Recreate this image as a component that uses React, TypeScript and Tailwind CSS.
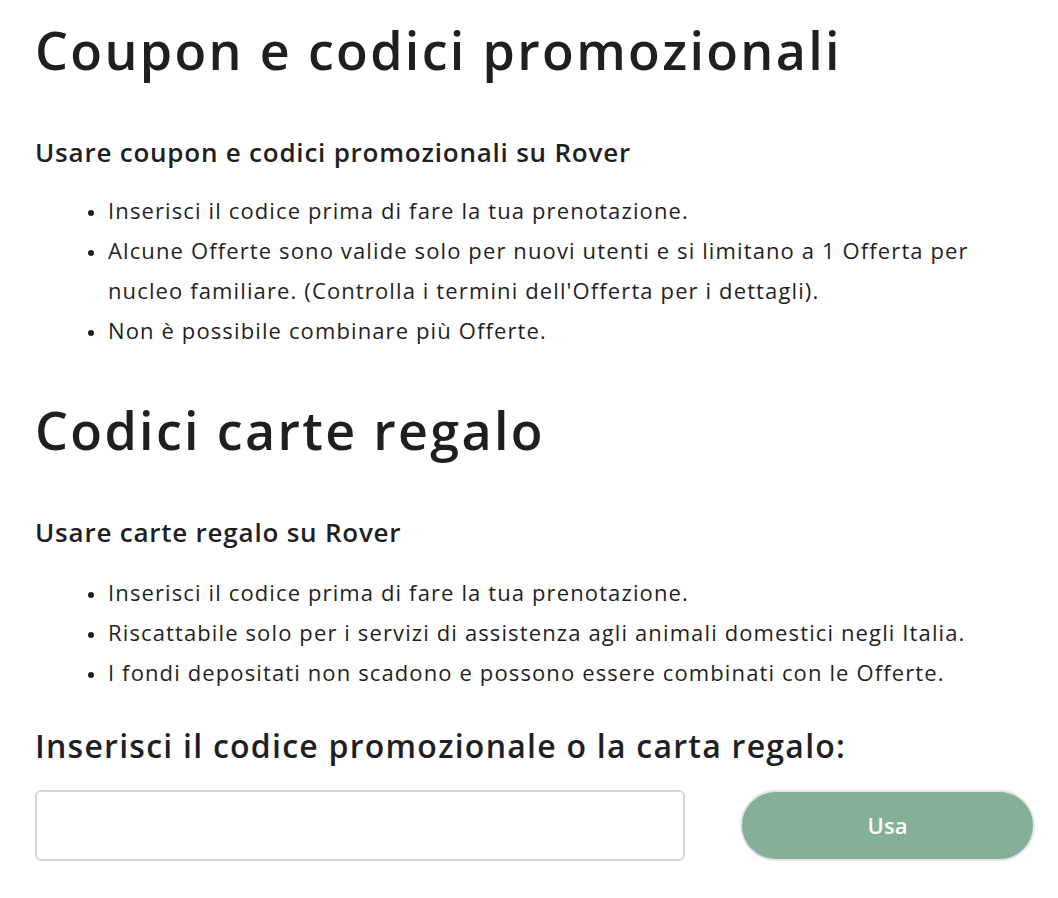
import React from "react";

const FONT = "font-['Open_Sans','Lato',sans-serif]";

function Bullets({ items, className = "mt-[22px]" }: { items: string[]; className?: string }) {
  return (
    <ul className={`${className} list-disc pl-[72px] text-[22px] leading-[40px] tracking-[0.051em] text-[#1f1f23] marker:text-[18px]`}>
      {items.map((t) => (
        <li key={t} className="pl-[1px]">
          {t}
        </li>
      ))}
    </ul>
  );
}

export default function App() {
  return (
    <div className={`${FONT} min-h-[898px] bg-white pl-[35px] pr-[23px] pt-[18px] text-[#1f1f23]`}>
      <h1 className="text-[52px] font-semibold leading-[64px] tracking-[0.045em]">Coupon e codici promozionali</h1>
      <h3 className="mt-[54px] text-[26px] font-semibold leading-[32px] tracking-[0.03em]">
        Usare coupon e codici promozionali su Rover
      </h3>
      <Bullets
        items={[
          "Inserisci il codice prima di fare la tua prenotazione.",
          "Alcune Offerte sono valide solo per nuovi utenti e si limitano a 1 Offerta per nucleo familiare. (Controlla i termini dell'Offerta per i dettagli).",
          "Non è possibile combinare più Offerte.",
        ]}
      />

      <h2 className="mt-[48px] text-[52px] font-semibold leading-[64px] tracking-[0.045em]">Codici carte regalo</h2>
      <h3 className="mt-[54px] text-[26px] font-semibold leading-[32px] tracking-[0.03em]">Usare carte regalo su Rover</h3>
      <Bullets
        className="mt-[24px]"
        items={[
          "Inserisci il codice prima di fare la tua prenotazione.",
          "Riscattabile solo per i servizi di assistenza agli animali domestici negli Italia.",
          "I fondi depositati non scadono e possono essere combinati con le Offerte.",
        ]}
      />

      <h3 className="mt-[34px] text-[32px] font-semibold leading-[40px] tracking-[0.039em]">
        Inserisci il codice promozionale o la carta regalo:
      </h3>
      <div className="mt-[24px] flex items-center gap-[55px]">
        <input
          type="text"
          className="h-[71px] w-[650px] shrink-0 rounded-[6px] border-2 border-[#d2d7dc] bg-white px-4 text-[22px] outline-none"
        />
        <button className="h-[71px] w-[295px] shrink-0 rounded-full border-2 border-[#e4e6ea] bg-[#84b097] text-[22px] font-semibold text-white">
          Usa
        </button>
      </div>
    </div>
  );
}
